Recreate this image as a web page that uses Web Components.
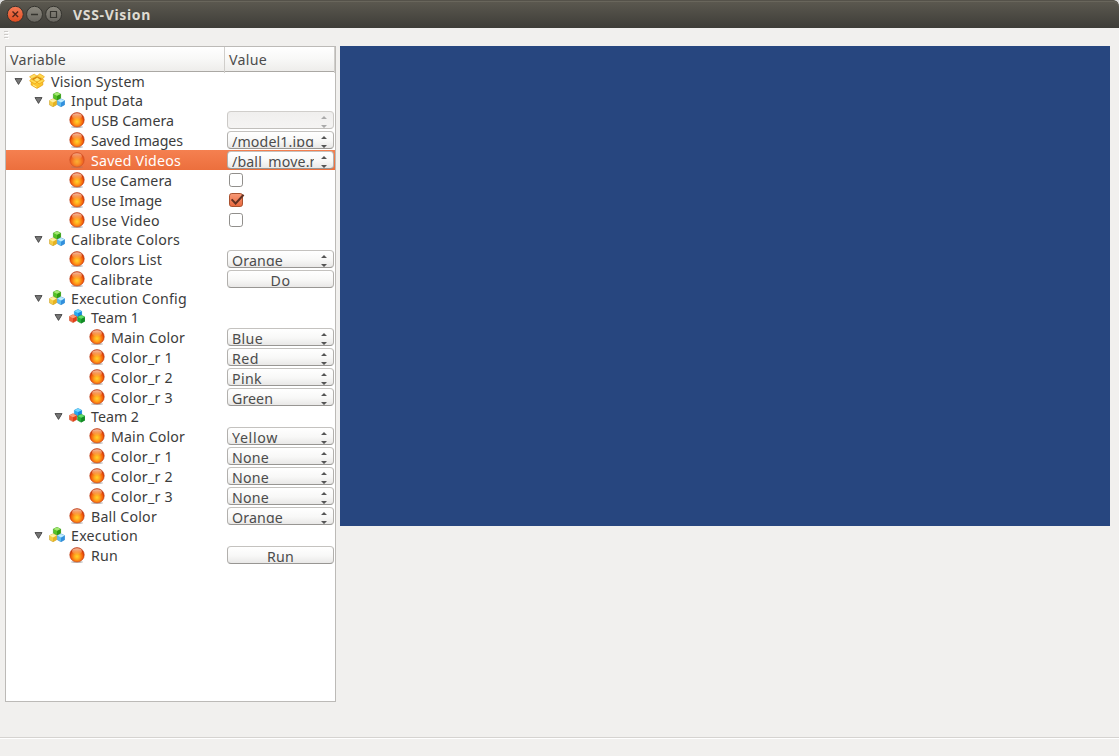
<!DOCTYPE html>
<html lang="en"><head><meta charset="utf-8"><title>VSS-Vision</title>
<style>html,body{margin:0;height:100%;overflow:hidden;background:#dcdcdc}</style></head>
<body><vision-window></vision-window>
<script>
function define(name, html, setup){
  const t=document.createElement('template'); t.innerHTML=html;
  customElements.define(name, class extends HTMLElement{
    connectedCallback(){
      if(this.shadowRoot) return;
      this.attachShadow({mode:'open'}).append(t.content.cloneNode(true));
      if(setup) setup(this,this.shadowRoot);
    }
  });
}

// Text run tracked to a given width
define('fit-text', `<style>:host{display:inline-block;white-space:pre}</style><span><slot></slot></span>`, (el,r)=>{
  const s=r.querySelector('span'), w=+el.getAttribute('w');
  if(w) s.style.letterSpacing=((w-s.getBoundingClientRect().width)/el.textContent.length).toFixed(3)+'px';
});

const ICONS={
orb:`<defs><radialGradient id="a" cx=".5" cy=".62" r=".55"><stop offset="0" stop-color="#ffd52c"/><stop offset=".35" stop-color="#ffa51c"/><stop offset=".7" stop-color="#f4630d"/><stop offset="1" stop-color="#c82d05"/></radialGradient><linearGradient id="b" x2="0" y2="1"><stop offset="0" stop-color="#ffe0c8" stop-opacity=".85"/><stop offset="1" stop-color="#ffb060" stop-opacity=".2"/></linearGradient></defs><ellipse cx="8" cy="15" rx="6" ry="1.1" fill="#777" opacity=".45"/><circle cx="8" cy="7.8" r="7.3" fill="url(#a)" stroke="#b93a10" stroke-width=".5"/><ellipse cx="8" cy="4.3" rx="4.9" ry="3.1" fill="url(#b)"/>`,
box:`<path d="M2.2 6 8 9l5.8-3v6L8 15.4 2.2 12Z" fill="#fdc62c" stroke="#e29a0b" stroke-width=".7"/><path d="M2.2 6 8 3l5.8 3L8 9Z" fill="#d88908"/><path d="m4.7 7 3.5-2.4L11.5 7 8 9Z" fill="#ffe774"/><path d="M2.4 5.8.6 3.7 5.2 1.2 8 3.1Z" fill="#ffe064" stroke="#eba411" stroke-width=".7"/><path d="M13.6 5.8 15.4 3.7 10.8.8 8 3.1Z" fill="#ffd84c" stroke="#eba411" stroke-width=".7"/><path d="m2.2 6-1.6 2L6 11l2-2 2 2 5.4-3-1.6-2L8 9Z" fill="#ffdb52" stroke="#e79c0d" stroke-width=".6"/><path d="m4 12 3.6 2" stroke="#fff09b"/>`,
};
function cube(x,y,top,left,right,edge){return `<g transform="translate(${x} ${y})"><path d="M4 .3 7.6 2v4.2L4 8.2.4 6.2V2Z" fill="${left}" stroke="${edge}" stroke-width=".6" stroke-linejoin="round"/><path d="M4 3.8 7.6 2v4.2L4 8.2Z" fill="${right}"/><path d="M4 .3 7.6 2 4 3.8.4 2Z" fill="${top}"/></g>`}
ICONS.cubes=cube(4,0,'#a5e773','#55c323','#329b12','#369a19')+cube(0,6.6,'#fff0a0','#f5cd44','#e6b322','#c8a238')+cube(8,6.6,'#c0edff','#5bbcf2','#328fdd','#438fc9');
ICONS.team=cube(5,.2,'#73d7ff','#26aaf1','#1587dc','#2792cf')+cube(0,5.4,'#ff9d74','#f26138','#df4018','#cc522f')+cube(8.2,6,'#61dc68','#22af37','#128a25','#20852d');

define('tree-icon', `<style>:host{display:block;width:16px;height:16px}svg{display:block}</style><svg width="16" height="16" viewBox="0 0 16 16"></svg>`,(el,r)=>{r.querySelector('svg').innerHTML=ICONS[el.getAttribute('name')]});

define('select-box', `<style>
:host{display:flex;box-sizing:border-box;width:107px;height:18px;border:1px solid #b5b3b0;border-color:#c4c2bf #b2b0ad #989693;border-radius:4px;background:linear-gradient(#fff,#f8f8f7 55%,#e9e8e7);color:#4c4c4c;justify-content:space-between;overflow:hidden}
:host([disabled]){background:linear-gradient(#f0efee,#f5f4f3);border-color:#d0cecb #cccac7 #c1bfbc;color:#b5b3b0}
.t{width:82px;height:15px;margin-left:4px;overflow:hidden;line-height:19px;white-space:pre}
svg{display:block;margin:3px 5px 0 0;color:#555}:host([disabled]) svg{color:#aaa}
</style><div class="t"><slot></slot></div><svg width="8" height="13" viewBox="0 0 8 13" fill="currentColor"><path d="M1 4 4 1 7 4ZM1 10h6L4 13Z"/></svg>`);

define('push-button', `<style>:host{display:block;box-sizing:border-box;width:107px;height:18px;border:1px solid;border-color:#c4c2bf #b2b0ad #989693;border-radius:4px;background:linear-gradient(#fff,#f8f8f7 55%,#e9e8e7);color:#4c4c4c;text-align:center;line-height:19px}</style><slot></slot>`);

define('check-box', `<style>:host{display:block;margin:2px 0 0 1px}svg{display:block;overflow:visible}.on{display:none}:host([checked]) .on{display:block}:host([checked]) .off{display:none}</style>
<svg width="17" height="15" viewBox="0 0 17 15"><defs><linearGradient id="g" x2="0" y2="1"><stop stop-color="#f79a78"/><stop offset="1" stop-color="#e9683d"/></linearGradient></defs><rect class="off" x="1.5" y=".5" width="13" height="13" rx="2.3" fill="#fff" stroke="#918f8c"/><g class="on"><rect x="1.5" y=".5" width="13" height="13" rx="2.3" fill="url(#g)" stroke="#a9522f"/><path d="M3.6 6.4 7.6 10.5 15.6 1.8" fill="none" stroke="#633121" stroke-width="2"/></g></svg>`);

define('tree-row', `<style>
:host{display:grid;grid-template-columns:221px 108px;height:20px;color:#3c3c3c}
:host([group]){height:19px}
:host([selected]){background:linear-gradient(#f58050,#ec6f3d);color:#fff}
.n{display:flex;padding-left:calc(var(--d)*20px + 3px)}
.a{width:20px;flex:none}.a svg{display:none;margin:6px 0 0 5px}:host([group]) .a svg{display:block}
tree-icon{margin:2px 6px 0 0;flex:none}:host([group]) tree-icon{margin-top:1px}
:host([selected]) tree-icon{opacity:.62}
.l{line-height:21px;height:20px}:host([group]) .l{line-height:19px;height:19px}
.v{padding-top:1px}
</style><div class="n"><span class="a"><svg width="9" height="7" viewBox="0 0 9 7"><path d="M1 .6h7L4.5 6.4Z" fill="#777" stroke="#4d4d4d"/></svg></span><tree-icon></tree-icon><span class="l"></span></div><div class="v"><slot></slot></div>`,(el,r)=>{
  r.querySelector('.n').style.setProperty('--d',el.getAttribute('depth'));
  const i=document.createElement('tree-icon');i.setAttribute('name',el.getAttribute('icon')||'orb');r.querySelector('tree-icon').replaceWith(i);
  const f=document.createElement('fit-text');f.setAttribute('w',el.getAttribute('w'));f.textContent=el.getAttribute('label');r.querySelector('.l').append(f);
});

const ROWS=[
[0,'Vision System',94,'box'],[1,'Input Data',72,'cubes'],
[2,'USB Camera',83,0,'<select-box disabled></select-box>'],
[2,'Saved Images',92,0,['/model1.jpg',82]],[2,'Saved Videos',90,0,['/ball_move.m',91],'selected'],
[2,'Use Camera',81,0,'<check-box></check-box>'],[2,'Use Image',71,0,'<check-box checked></check-box>'],[2,'Use Video',69,0,'<check-box></check-box>'],
[1,'Calibrate Colors',109,'cubes'],[2,'Colors List',71,0,['Orange',51]],
[2,'Calibrate',62,0,'<push-button><fit-text w="20">Do</fit-text></push-button>'],
[1,'Execution Config',116,'cubes'],
[2,'Team 1',48,'team'],[3,'Main Color',74,0,['Blue',31]],[3,'Color_r 1',62,0,['Red',27]],[3,'Color_r 2',62,0,['Pink',30]],[3,'Color_r 3',62,0,['Green',41]],
[2,'Team 2',48,'team'],[3,'Main Color',74,0,['Yellow',46]],[3,'Color_r 1',62,0,['None',37]],[3,'Color_r 2',62,0,['None',37]],[3,'Color_r 3',62,0,['None',37]],
[2,'Ball Color',66,0,['Orange',51]],[1,'Execution',67,'cubes'],
[2,'Run',27,0,'<push-button><fit-text w="27">Run</fit-text></push-button>']];

define('variable-tree', `<style>
:host{display:block;box-sizing:border-box;width:331px;height:656px;border:1px solid #bcbab7;background:#fff;font-size:14.2px}
.h{display:grid;grid-template-columns:219px 1fr;height:24px;border-bottom:1px solid #aaa8a4;background:linear-gradient(#fff,#f8f8f7 50%,#eeedeb);color:#4c4c4c;line-height:26px}
.h div{padding-left:4px;border-right:1px solid #d0cecb}
</style><div class="h"><div><fit-text w="56">Variable</fit-text></div><div><fit-text w="38">Value</fit-text></div></div><div class="b"></div>`,(el,r)=>{
  r.querySelector('.b').innerHTML=ROWS.map(([d,l,w,ic,v,s])=>`<tree-row depth="${d}" label="${l}" w="${w}" ${ic?`group icon="${ic}"`:''} ${s||''}>${Array.isArray(v)?`<select-box><fit-text w="${v[1]}">${v[0]}</fit-text></select-box>`:v||''}</tree-row>`).join('');
});

define('title-bar', `<style>
:host{display:flex;box-sizing:border-box;height:28px;padding:0 0 0 6px;align-items:center;background:linear-gradient(#5d5a51,#3e3d38);box-shadow:inset 0 1px #55524a,inset 0 2px #69665c;border-radius:6px 6px 0 0;color:#dfdbd2;font-weight:700;font-size:14px}
svg{display:block;margin-right:10px}fit-text{line-height:28px;margin-top:1px}
</style><svg width="57" height="20" viewBox="0 0 57 20" fill="none"><defs><linearGradient id="r" x2="0" y2="1"><stop stop-color="#f47b57"/><stop offset="1" stop-color="#df4c20"/></linearGradient><linearGradient id="k" x2="0" y2="1"><stop stop-color="#8b887e"/><stop offset="1" stop-color="#686660"/></linearGradient></defs>
<g stroke="#35342f"><circle cx="9.3" cy="10.3" r="8" fill="url(#r)"/><circle cx="28.5" cy="10.3" r="8" fill="url(#k)"/><circle cx="47.6" cy="10.3" r="8" fill="url(#k)"/></g>
<path d="m6.5 7.5 5.6 5.6m0-5.6-5.6 5.6" stroke="#54261a" stroke-width="1.4"/><path d="M25 10.5h7" stroke="#35342f" stroke-width="1.3"/><path d="M44.5 7.5h6v6h-6Z" stroke="#35342f" stroke-width="1.2"/></svg><fit-text w="78">VSS-Vision</fit-text>`);

define('tool-strip', `<style>:host{display:block;height:18px;padding-left:4px}svg{display:block}</style><svg width="6" height="14" viewBox="0 0 6 14"><path d="M0 3.5h4M0 6.5h4M0 9.5h4" stroke="#cdcbc8"/><path d="M1 4.5h4M1 7.5h4M1 10.5h4" stroke="#fff"/></svg>`);
define('video-view', `<style>:host{display:block;width:770px;height:480px;background:#27467f}</style>`);
define('status-bar', `<style>:host{display:block;height:18px;border-top:1px solid #d5d3d0;box-shadow:inset 0 1px #fff}</style>`);
define('vision-window', `<style>
:host{display:flex;flex-direction:column;height:756px;width:1119px;border-radius:6px 6px 0 0;overflow:hidden;background:#f1f0ee;font-family:"Noto Sans","Open Sans",sans-serif}
main{display:flex;flex:1;gap:4px;padding-left:5px;align-items:flex-start}
</style><title-bar></title-bar><tool-strip></tool-strip><main><variable-tree></variable-tree><video-view></video-view></main><status-bar></status-bar>`);
</script></body></html>
